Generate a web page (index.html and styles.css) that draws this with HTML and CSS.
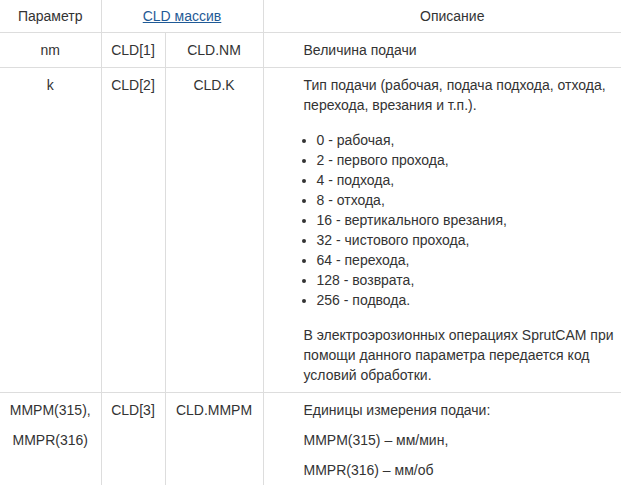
FILE: index.html
```html
<!DOCTYPE html>
<html lang="ru">
<head>
<meta charset="utf-8">
<link rel="stylesheet" href="styles.css">
</head>
<body>
<table class="cld">
  <colgroup>
    <col class="c1"><col class="c2"><col class="c3"><col class="c4">
  </colgroup>
  <thead>
    <tr>
      <th>Параметр</th>
      <th colspan="2"><a href="#" class="link">CLD массив</a></th>
      <th class="desc-h">Описание</th>
    </tr>
  </thead>
  <tbody>
    <tr>
      <td>nm</td>
      <td>CLD[1]</td>
      <td>CLD.NM</td>
      <td class="desc">Величина подачи</td>
    </tr>
    <tr>
      <td>k</td>
      <td>CLD[2]</td>
      <td>CLD.K</td>
      <td class="desc">
        <p>Тип подачи (рабочая, подача подхода, отхода, перехода, врезания и т.п.).</p>
        <ul>
          <li>0 - рабочая,</li>
          <li>2 - первого прохода,</li>
          <li>4 - подхода,</li>
          <li>8 - отхода,</li>
          <li>16 - вертикального врезания,</li>
          <li>32 - чистового прохода,</li>
          <li>64 - перехода,</li>
          <li>128 - возврата,</li>
          <li>256 - подвода.</li>
        </ul>
        <p>В электроэрозионных операциях SprutCAM при помощи данного параметра передается код условий обработки.</p>
      </td>
    </tr>
    <tr>
      <td><p class="sp">MMPM(315),</p><p class="sp">MMPR(316)</p></td>
      <td>CLD[3]</td>
      <td>CLD.MMPM</td>
      <td class="desc">
        <p class="sp">Единицы измерения подачи:</p>
        <p class="sp">MMPM(315) – мм/мин,</p>
        <p class="sp">MMPR(316) – мм/об</p>
      </td>
    </tr>
  </tbody>
</table>
</body>
</html>
```
FILE: styles.css
```css
html, body {
  margin: 0;
  padding: 0;
  background: #fff;
}
body {
  font-family: "Liberation Sans", Arial, sans-serif;
  font-size: 14px;
  line-height: 20px;
  color: #333;
}
.cld {
  border-collapse: collapse;
  table-layout: fixed;
  width: 621px;
}
.c1 { width: 101px; }
.c2 { width: 64px; }
.c3 { width: 98px; }
.c4 { width: 358px; }
.cld th, .cld td {
  border: 1px solid #ddd;
  text-align: center;
  vertical-align: top;
  font-weight: normal;
  padding: 7px 8px;
}
.cld th {
  border-top: none;
  padding: 6px 8px;
}
.cld tr > :first-child { border-left: none; }
.cld tr > :last-child { border-right: none; }
.cld tbody tr:last-child td { border-bottom: none; }
.cld th.desc-h {
  padding-left: 40px;
  padding-right: 20px;
}
.cld td.desc {
  text-align: left;
  padding-left: 40px;
  padding-right: 4px;
}
.link {
  color: #1f5a96;
  text-decoration: underline;
}
.desc p {
  margin: 0 0 15px;
}
.desc p:last-child { margin-bottom: 0; }
.desc ul {
  margin: 0 0 15px;
  padding-left: 13px;
}
.cld p.sp {
  margin: 0 0 10px;
}
.cld p.sp:last-child { margin-bottom: 0; }
```
